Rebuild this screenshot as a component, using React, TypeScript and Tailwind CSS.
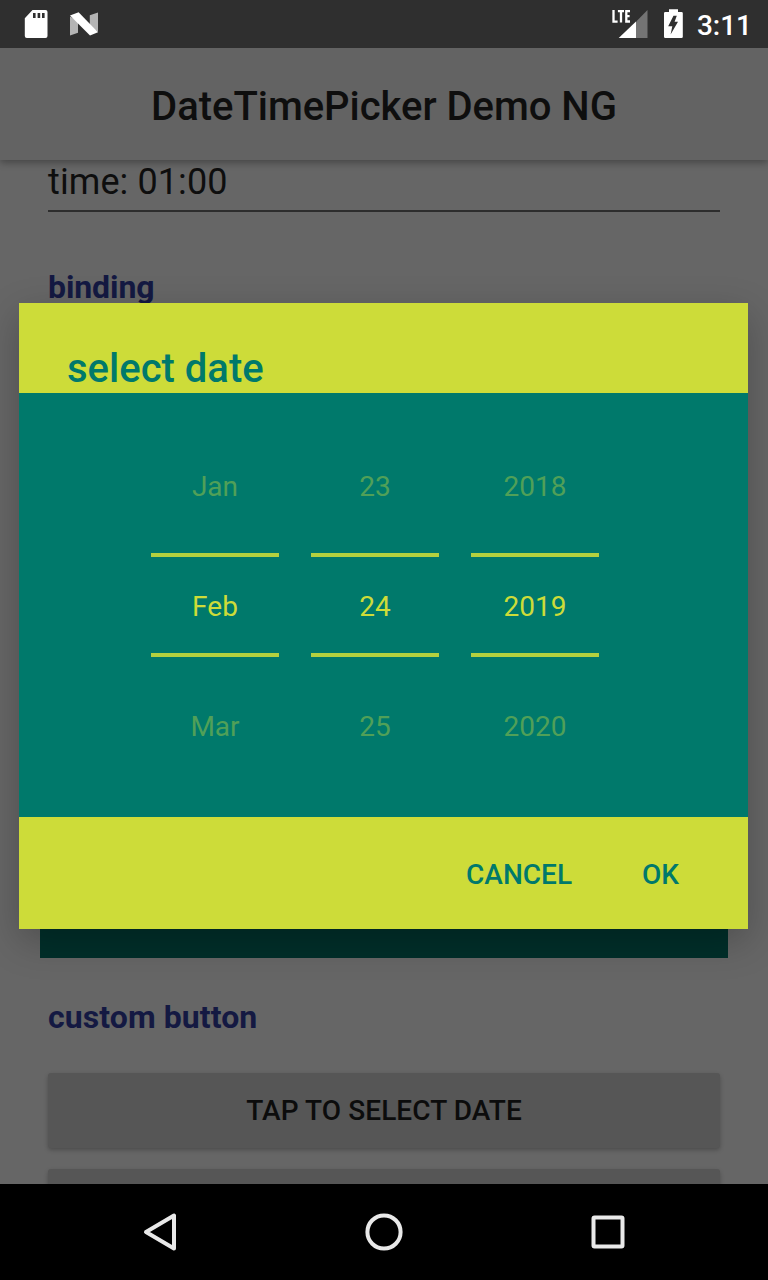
const columns = [
  ["Jan", "Feb", "Mar"],
  ["23", "24", "25"],
  ["2018", "2019", "2020"],
];

function StatusBar() {
  return (
    <header className="flex h-12 shrink-0 items-center bg-[#2f2f2f] pl-6 pr-4 text-white">
      <svg className="h-12 w-6" viewBox="24 0 24 48">
        <path
          fill="#fff"
          fillRule="evenodd"
          d="M32.5 10H45.5Q47.5 10 47.5 12V36Q47.5 38 45.5 38H26.8Q24.8 38 24.8 36V18.2ZM33 13V18H35.6V13ZM37.6 13V18H40.2V13ZM42 13V18H44.6V13Z"
        />
      </svg>
      <svg className="ml-[21px] h-12 w-[30px]" viewBox="69 0 30 48">
        <path fill="#b4b4b4" d="M70 16.5L78 21V32.8L70 35.5ZM98 12.5V32L89.8 26V15.2Z" />
        <path fill="#fff" d="M70 15.4L78.6 12.2L98 32.2L90 35.6Z" />
      </svg>
      <div className="flex-1" />
      <svg className="h-12 w-9" viewBox="612 0 36 48">
        <path fill="#747474" d="M636 21.7L647.5 10V38H636Z" />
        <path fill="#fff" d="M618.7 38L636 21.5V38Z" />
        <path
          fill="none"
          stroke="#fff"
          strokeWidth="2.3"
          d="M613.5 10V21.6H617.6M617.9 11.2H624M621 11.2V22.5M630 11.2H626.3V21.5H630M626.3 16.2H629.6"
        />
      </svg>
      <svg className="ml-4 h-12 w-[19px]" viewBox="664 0 19 48">
        <path fill="#fff" d="M669 9.2H678V12H681.5Q682.8 12 682.8 13.2V36.8Q682.8 38 681.5 38H665.3Q664 38 664 36.8V13.2Q664 12 665.3 12H669Z" />
        <path fill="#2f2f2f" d="M673.5 15.8H676.8L674.6 21.8H678L670.6 34.6L672.3 26.2H668.2Z" />
      </svg>
      <time className="ml-[14px] mt-[3px] text-[28px] font-medium leading-8">3:11</time>
    </header>
  );
}

function PageContent() {
  return (
    <main className="flex h-[1136px] shrink-0 flex-col overflow-hidden bg-[#666666]">
      <div className="z-10 flex h-28 shrink-0 items-center justify-center bg-[#636363] pt-1.5 shadow-[0_3px_7px_rgba(0,0,0,0.3)]">
        <h1 className="text-[40px] font-medium leading-[48px] tracking-[-0.03px] text-[#0e0e0e]">DateTimePicker Demo NG</h1>
      </div>
      <div className="mx-12 flex h-[52px] shrink-0 flex-col border-b-2 border-[#2d2d2d] text-4xl leading-[44px] tracking-[0.1px] text-[#0e0e0e]">
        time: 01:00
      </div>
      <h2 className="mx-12 mt-[55px] h-10 shrink-0 text-[32px] font-bold leading-10 tracking-[-0.1px] text-[#141942]">binding</h2>
      <div className="mx-10 mt-[550px] h-[101px] shrink-0 bg-[#002f2a]" />
      <h2 className="mx-12 mt-[39px] h-10 shrink-0 text-[32px] font-bold leading-10 tracking-[0.08px] text-[#141942]">custom button</h2>
      <button className="mx-12 mt-9 h-[75px] shrink-0 rounded-[3px] bg-[#565656] text-[28px] font-medium leading-8 tracking-[0.08px] text-[#0c0c0c] shadow-[0_2px_4px_rgba(0,0,0,0.25)]">
        TAP TO SELECT DATE
      </button>
      <div className="mx-12 mt-[21px] h-[75px] shrink-0 rounded-[3px] bg-[#565656] shadow-[0_2px_4px_rgba(0,0,0,0.25)]" />
    </main>
  );
}

function PickerColumn({ values }: { values: string[] }) {
  return (
    <div className="flex w-32 flex-col text-center text-[28px] leading-8">
      <div className="h-[83px] pt-px text-[#50a058]">{values[0]}</div>
      <div className="flex h-[104px] flex-col justify-center border-y-4 border-[#b3d13f] pt-[3px] text-[#cddc39]">
        {values[1]}
      </div>
      <div className="pt-[54px] text-[#50a058]">{values[2]}</div>
    </div>
  );
}

function DateDialog() {
  return (
    <section
      role="dialog"
      className="absolute left-[19px] top-[303px] z-20 flex h-[626px] w-[729px] flex-col bg-[#cddc39] text-[#00796b] shadow-[0_12px_36px_rgba(0,0,0,0.24)]"
    >
      <h2 className="h-[90px] shrink-0 pl-12 pt-[42px] text-[40px] font-medium leading-[48px]">select date</h2>
      <div className="flex h-[424px] shrink-0 gap-8 bg-[#00796b] pl-[132px] pt-[77px]">
        {columns.map((values) => (
          <PickerColumn key={values[1]} values={values} />
        ))}
      </div>
      <div className="flex flex-1 items-center justify-end gap-[70px] pr-[69px] pt-[3px] text-[28px] font-medium leading-8">
        <button>CANCEL</button>
        <button>OK</button>
      </div>
    </section>
  );
}

function NavigationBar() {
  return (
    <nav className="z-30 flex h-24 shrink-0 items-center justify-between bg-black px-[136px]">
      <svg className="size-12" viewBox="0 0 48 48" fill="none" stroke="#e9e9e9" strokeWidth="4">
        <path strokeLinejoin="round" d="M10 24L38 7.5V40.5Z" />
      </svg>
      <svg className="size-12" viewBox="0 0 48 48" fill="none" stroke="#e9e9e9" strokeWidth="4">
        <circle cx="24" cy="24" r="16.6" />
      </svg>
      <svg className="size-12" viewBox="0 0 48 48" fill="none" stroke="#e9e9e9" strokeWidth="4">
        <rect x="9.5" y="9.5" width="29" height="29" rx="1" />
      </svg>
    </nav>
  );
}

export default function App() {
  return (
    <div className="relative flex h-[1280px] w-[768px] flex-col overflow-hidden bg-black font-[Roboto,sans-serif]">
      <StatusBar />
      <PageContent />
      <DateDialog />
      <NavigationBar />
    </div>
  );
}
